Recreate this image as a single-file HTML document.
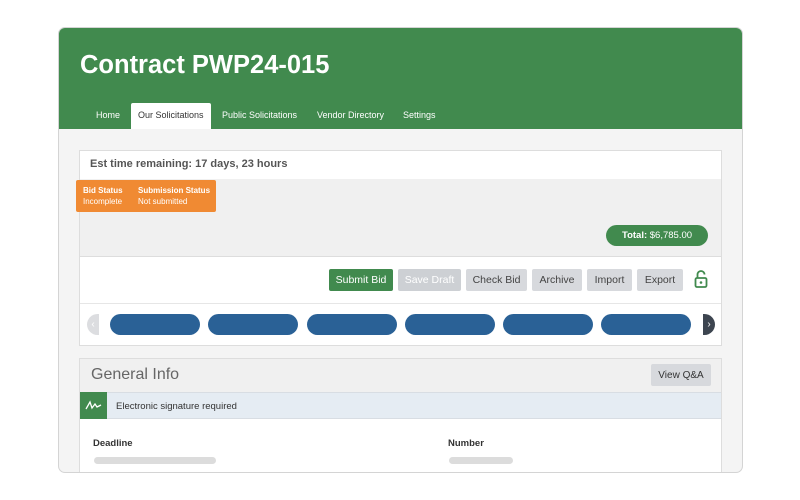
<!DOCTYPE html>
<html><head><style>
*{box-sizing:border-box;margin:0;padding:0}
body{width:800px;height:500px;background:#fff;font-family:"Liberation Sans",sans-serif;position:relative;overflow:hidden}
.frame{position:absolute;left:58px;top:27px;width:685px;height:446px;border:1px solid #d4d4d4;border-radius:7px;overflow:hidden;background:#f4f4f4}
.hdr{position:absolute;left:0;top:0;width:100%;height:101px;background:#418a4e}
.title{position:absolute;left:21px;top:23px;color:#fff;font-size:25.5px;font-weight:bold}
.tab{position:absolute;top:75px;height:26px;line-height:25px;font-size:9px;color:#fff;padding:0 7px}
.tab.act{background:#fff;color:#333;border-radius:2px 2px 0 0}
.abs{position:absolute}
.btn{position:absolute;top:241px;height:22px;line-height:23px;font-size:10.5px;border-radius:2px;text-align:center;background:#d7d9dd;color:#444}
.pill{position:absolute;top:286px;width:90px;height:21px;border-radius:11px;background:#2a6196}
</style></head><body>
<div class="frame">
<div class="hdr">
<div class="title">Contract PWP24-015</div>
<div class="tab" style="left:30px">Home</div>
<div class="tab act" style="left:72px;width:80px">Our Solicitations</div>
<div class="tab" style="left:156px">Public Solicitations</div>
<div class="tab" style="left:251px">Vendor Directory</div>
<div class="tab" style="left:337px">Settings</div>
</div>
<div class="abs" style="left:20px;top:122px;width:643px;height:196px;background:#fff;border:1px solid #ddd"></div>
<div class="abs" style="left:31px;top:130px;font-size:11px;font-weight:bold;color:#555">Est time remaining: 17 days, 23 hours</div>
<div class="abs" style="left:21px;top:151px;width:641px;height:78px;background:#f0f0f0;border-bottom:1px solid #ddd"></div>
<div class="abs" style="left:17px;top:152px;width:140px;height:32px;background:#f08a33;border-radius:2px;color:#fff;font-size:8px;line-height:11px">
<span style="position:absolute;left:7px;top:5px;font-weight:bold">Bid Status</span><span style="position:absolute;left:7px;top:16px">Incomplete</span>
<span style="position:absolute;left:62px;top:5px;font-weight:bold">Submission Status</span><span style="position:absolute;left:62px;top:16px">Not submitted</span></div>
<div class="abs" style="left:547px;top:197px;width:102px;height:21px;border-radius:11px;background:#418a4e;color:#fff;font-size:9.5px;line-height:21px;text-align:center"><b>Total:</b> $6,785.00</div>
<div class="btn" style="left:270px;width:64px;background:#418a4e;color:#fff">Submit Bid</div>
<div class="btn" style="left:339px;width:63px;color:#fff;background:#cdd0d4">Save Draft</div>
<div class="btn" style="left:407px;width:61px">Check Bid</div>
<div class="btn" style="left:473px;width:50px">Archive</div>
<div class="btn" style="left:528px;width:45px">Import</div>
<div class="btn" style="left:578px;width:46px">Export</div>
<svg class="abs" style="left:635px;top:241px" width="14" height="20" viewBox="0 0 14 20"><path d="M3.5 9V5.5a3.5 3.5 0 0 1 7 0" fill="none" stroke="#418a4e" stroke-width="1.8"/><rect x="1.5" y="9" width="11" height="9" rx="1.5" fill="none" stroke="#418a4e" stroke-width="1.8"/><circle cx="7" cy="13.5" r="1.3" fill="#418a4e"/></svg>
<div class="abs" style="left:21px;top:275px;width:641px;height:1px;background:#e6e6e6"></div>
<div class="abs" style="left:28px;top:286px;width:12px;height:21px;border-radius:11px 0 0 11px;background:#dcdde0;color:#fff;font-size:10px;line-height:21px;text-align:center">‹</div>
<div class="pill" style="left:51px"></div><div class="pill" style="left:149px"></div><div class="pill" style="left:248px"></div><div class="pill" style="left:346px"></div><div class="pill" style="left:444px"></div><div class="pill" style="left:542px"></div>
<div class="abs" style="left:644px;top:286px;width:12px;height:21px;border-radius:0 11px 11px 0;background:#3d4550;color:#fff;font-size:10px;line-height:21px;text-align:center">›</div>
<div class="abs" style="left:20px;top:330px;width:643px;height:130px;background:#fff;border:1px solid #ddd"></div>
<div class="abs" style="left:21px;top:331px;width:641px;height:33px;background:#f0f0f0"></div>
<div class="abs" style="left:32px;top:338px;font-size:16px;color:#666">General Info</div>
<div class="abs" style="left:592px;top:336px;width:60px;height:22px;background:#d7d9dd;border-radius:2px;font-size:10px;line-height:23px;text-align:center;color:#333">View Q&amp;A</div>
<div class="abs" style="left:21px;top:364px;width:641px;height:27px;background:#e5ecf3;border-top:1px solid #d8dde3;border-bottom:1px solid #d8dde3"></div>
<div class="abs" style="left:21px;top:364px;width:27px;height:27px;background:#418a4e"></div>
<svg class="abs" style="left:26px;top:371px" width="17" height="12" viewBox="0 0 17 12"><path d="M1 10L5 3l2 6 3-4 2 3 4-2" fill="none" stroke="#fff" stroke-width="1.3"/></svg>
<div class="abs" style="left:57px;top:373px;font-size:9.5px;color:#333">Electronic signature required</div>
<div class="abs" style="left:34px;top:410px;font-size:9.5px;font-weight:bold;color:#333">Deadline</div>
<div class="abs" style="left:389px;top:410px;font-size:9.5px;font-weight:bold;color:#333">Number</div>
<div class="abs" style="left:35px;top:429px;width:122px;height:7px;border-radius:4px;background:#dcdcdc"></div>
<div class="abs" style="left:390px;top:429px;width:64px;height:7px;border-radius:4px;background:#dcdcdc"></div>
</div>
</body></html>
